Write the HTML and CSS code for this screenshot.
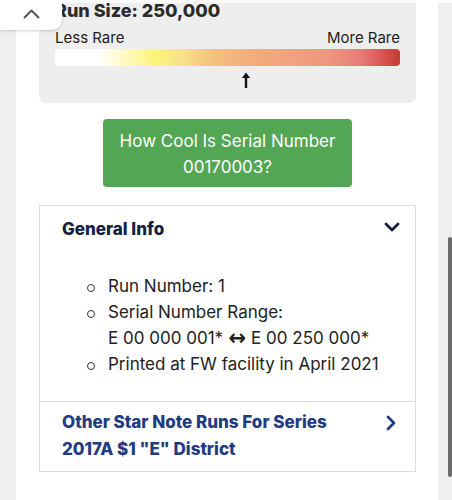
FILE: index.html
```html
<!DOCTYPE html>
<html lang="en">
<head>
<meta charset="utf-8">
<title>Star Note Run</title>
<link rel="stylesheet" href="styles.css">
</head>
<body>
<div class="page">
  <main class="column">
    <section class="rarity">
      <h2 class="run-size">Run Size: 250,000</h2>
      <div class="labels"><span>Less Rare</span><span>More Rare</span></div>
      <div class="bar"></div>
      <div class="pointer">
        <svg width="10" height="16" viewBox="0 0 10 16"><path d="M5 16V3.5" stroke="#111" stroke-width="2.4" fill="none"/><path d="M0.9 6L5 0.6 9.1 6Z" fill="#111"/></svg>
      </div>
    </section>

    <a class="cool-btn" href="#">How Cool Is Serial Number<br>00170003?</a>

    <section class="card">
      <div class="card-head">
        <h3>General Info</h3>
        <svg class="chev" width="16" height="10" viewBox="0 0 16 10"><path d="M2 2l6 6 6-6" stroke="#13203f" stroke-width="2.8" fill="none" stroke-linecap="round" stroke-linejoin="round"/></svg>
      </div>
      <ul class="info">
        <li><span>Run Number: 1</span></li>
        <li><span>Serial Number Range:<br>E 00 000 001* <span class="dbl">↔</span> E 00 250 000*</span></li>
        <li><span>Printed at FW facility in April 2021</span></li>
      </ul>
      <a class="card-link" href="#">
        <span>Other Star Note Runs For Series<br>2017A $1 "E" District</span>
        <svg class="chev-r" width="10" height="16" viewBox="0 0 10 16"><path d="M2 2l6 6-6 6" stroke="#1f3b82" stroke-width="2.8" fill="none" stroke-linecap="round" stroke-linejoin="round"/></svg>
      </a>
    </section>
  </main>
</div>
<div class="top-tab">
  <svg width="17" height="10" viewBox="0 0 17 10"><path d="M1.5 8.5l7-7 7 7" stroke="#555" stroke-width="2" fill="none" stroke-linecap="round" stroke-linejoin="round"/></svg>
</div>
<div class="top-strip"></div>
<div class="scroll-thumb"></div>
</body>
</html>
```

FILE: styles.css
```css
* { box-sizing: border-box; }
html, body { margin: 0; padding: 0; }
body {
  background: #efefef;
  font-family: Inter, "Open Sans", "Liberation Sans", sans-serif;
  color: #222;
  width: 452px;
  height: 500px;
  overflow: hidden;
}
.page {
  padding: 0 14px 0 16px;
}
.column {
  background: #fff;
  padding: 0 22px 40px 23px;
  margin-top: -14px;
  display: flex;
  flex-direction: column;
  align-items: stretch;
}
.rarity {
  background: #eeeeee;
  border-radius: 0 0 7px 7px;
  padding: 14px 16px 15px 16px;
  display: flex;
  flex-direction: column;
}
.run-size {
  margin: 0;
  font-size: 18px;
  line-height: 22px;
  font-weight: 800;
  color: #2a2a2a;
}
.labels {
  margin-top: 6px;
  display: flex;
  justify-content: space-between;
  font-size: 15px;
  line-height: 20px;
  color: #222;
}
.bar {
  margin-top: 1px;
  height: 17px;
  border-radius: 4px;
  background: linear-gradient(to right,
    #ffffff 0%, #ffffff 12%, #fffbd6 18%, #fbf57c 29%, #f8e089 37%,
    #f4c17f 46%, #f2ae7b 56%, #f0a17d 70%, #ed9580 80%, #e77b79 89%,
    #d65450 95%, #c63b34 100%);
}
.pointer {
  margin-top: 6px;
  height: 16px;
  display: flex;
  justify-content: flex-start;
  padding-left: 186px;
}
.pointer svg { display: block; }
.cool-btn {
  align-self: center;
  margin-top: 16px;
  width: 249px;
  height: 68px;
  background: #53a653;
  color: #fff;
  text-decoration: none;
  border-radius: 4px;
  text-align: center;
  font-size: 17px;
  line-height: 26px;
  padding-top: 9px;
}
.card {
  margin-top: 18px;
  border: 1px solid #dcdcdc;
  display: flex;
  flex-direction: column;
}
.card-head {
  display: flex;
  justify-content: space-between;
  align-items: flex-start;
  padding: 10px 15px 0 22px;
}
.card-head h3 {
  margin: 0;
  font-size: 17px;
  line-height: 26px;
  font-weight: 800;
  color: #13203f;
}
.chev { margin-top: 6px; }
.info {
  list-style: none;
  margin: 31px 0 0 0;
  padding: 0 10px 24px 47px;
  border-bottom: 1px solid #dcdcdc;
  font-size: 17px;
  line-height: 26px;
  color: #222;
}
.info li {
  display: flex;
  align-items: flex-start;
}
.info li::before {
  content: "";
  flex: none;
  width: 6px;
  height: 6px;
  border: 1.2px solid #333;
  border-radius: 50%;
  margin: 11px 13px 0 0;
}
.dbl {
  font-family: "DejaVu Sans", sans-serif;
  font-weight: 700;
  font-size: 22px;
  line-height: 1;
  vertical-align: -1px;
  display: inline-block;
  transform: scaleX(0.95);
}
.card-link {
  display: flex;
  justify-content: space-between;
  align-items: flex-start;
  padding: 7px 19px 8px 22px;
  text-decoration: none;
  font-size: 17px;
  line-height: 27px;
  font-weight: 800;
  color: #1f3b82;
}
.chev-r { margin-top: 6px; flex: none; }
.top-tab {
  position: fixed;
  left: 0;
  top: 0;
  width: 62px;
  height: 30px;
  background: #fff;
  border-radius: 0 0 10px 0;
  box-shadow: 0 1px 3px rgba(0,0,0,0.18);
  display: flex;
  align-items: center;
  justify-content: center;
  padding-bottom: 2px;
}
.top-strip {
  position: fixed;
  left: 62px;
  right: 0;
  top: 0;
  height: 3px;
  background: rgba(255,255,255,0.75);
}
.scroll-thumb {
  position: fixed;
  left: 448px;
  top: 237px;
  width: 4px;
  height: 240px;
  border-radius: 2px;
  background: #6b6b6b;
}
```
